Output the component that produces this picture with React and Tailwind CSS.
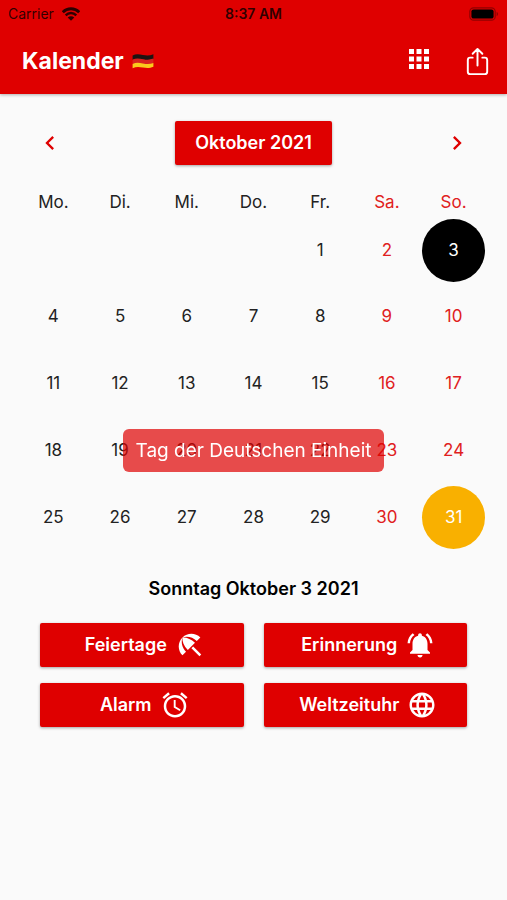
import { useState } from 'react';
import { IoShareOutline } from 'react-icons/io5';
import {
  MdAlarm,
  MdApps,
  MdBeachAccess,
  MdChevronLeft,
  MdChevronRight,
  MdLanguage,
  MdNotificationsActive,
} from 'react-icons/md';

const monate = [
  'Januar', 'Februar', 'März', 'April', 'Mai', 'Juni',
  'Juli', 'August', 'September', 'Oktober', 'November', 'Dezember',
];

const wochentage = ['Mo.', 'Di.', 'Mi.', 'Do.', 'Fr.', 'Sa.', 'So.'];

const tagNamen = [
  'Montag', 'Dienstag', 'Mittwoch', 'Donnerstag', 'Freitag', 'Samstag', 'Sonntag',
];

const feiertage = {
  '2021-10-3': 'Tag der Deutschen Einheit',
  '2021-10-31': 'Reformationstag',
};

const aktionen = [
  { id: 'feiertage', label: 'Feiertage', Icon: MdBeachAccess },
  { id: 'erinnerung', label: 'Erinnerung', Icon: MdNotificationsActive },
  { id: 'alarm', label: 'Alarm', Icon: MdAlarm },
  { id: 'weltzeituhr', label: 'Weltzeituhr', Icon: MdLanguage },
];

// Monday is column 0
function spalte(date) {
  return (date.getDay() + 6) % 7;
}

function getWochen(jahr, monat) {
  const anzahl = new Date(jahr, monat + 1, 0).getDate();
  const zellen = Array(spalte(new Date(jahr, monat, 1))).fill(null);
  for (let tag = 1; tag <= anzahl; tag++) zellen.push(tag);
  while (zellen.length % 7 !== 0) zellen.push(null);

  const wochen = [];
  for (let i = 0; i < zellen.length; i += 7) wochen.push(zellen.slice(i, i + 7));
  return wochen;
}

function feiertagAm(date) {
  return feiertage[`${date.getFullYear()}-${date.getMonth() + 1}-${date.getDate()}`];
}

function WifiIcon() {
  return (
    <svg viewBox="0 0 18 14" className="h-[14px] w-[18px]" fill="none" stroke="currentColor" aria-hidden="true">
      <path d="M0.8 5.2C5.2 0.6 12.8 0.6 17.2 5.2" strokeWidth="2.8" />
      <path d="M3.7 8.3C6.7 5.3 11.3 5.3 14.3 8.3" strokeWidth="2.4" />
      <path d="M9 13.8L5.7 10.5C7.6 8.8 10.4 8.8 12.3 10.5Z" fill="currentColor" stroke="none" />
    </svg>
  );
}

function BatteryIcon() {
  return (
    <svg viewBox="0 0 30 14" className="h-[14px] w-[30px]" aria-hidden="true">
      <rect x="0.8" y="0.8" width="25.4" height="12.4" rx="3.8" fill="none" stroke="#000" strokeOpacity="0.35" strokeWidth="1.2" />
      <rect x="2.4" y="2.4" width="22.2" height="9.2" rx="2.2" fill="#000" />
      <path d="M27.6 4.8C29.6 5.6 29.6 8.4 27.6 9.2Z" fill="#000" fillOpacity="0.35" />
    </svg>
  );
}

function Flagge() {
  return (
    <svg viewBox="0 0 22 16" className="h-4 w-[22px]" role="img" aria-label="Deutschland">
      <path d="M0.6 2.4C4 0.8 7 1.2 11 2C15 2.8 18 2.6 21.4 1.2V6C18 7.4 15 7.4 11 6.6C7 5.8 4 5.4 0.6 7Z" fill="#1d1412" />
      <path d="M0.6 6.6C4 5 7 5.4 11 6.2C15 7 18 7 21.4 5.6V10.2C18 11.6 15 11.6 11 10.8C7 10 4 9.6 0.6 11.2Z" fill="#d8211f" />
      <path d="M0.6 10.9C4 9.3 7 9.7 11 10.5C15 11.3 18 11.3 21.4 9.9V13.8C18 15.3 15 15.4 11 14.6C7 13.8 4 13.6 0.6 15.2Z" fill="#fbc91c" />
    </svg>
  );
}

function StatusBar() {
  return (
    <div className="grid h-7 grid-cols-3 items-center px-2 text-sm text-black/80">
      <div className="flex items-center gap-2">
        <span>Carrier</span>
        <WifiIcon />
      </div>
      <span className="text-center font-semibold">8:37 AM</span>
      <div className="flex justify-end">
        <BatteryIcon />
      </div>
    </div>
  );
}

function tagFarbe(date, ausgewaehlt, index) {
  if (ausgewaehlt) return 'bg-black text-white';
  if (feiertagAm(date)) return 'bg-[#f9b000] text-white';
  return index >= 5 ? 'text-[#e02020]' : 'text-[#222222]';
}

export default function App() {
  const [monatRef, setMonatRef] = useState(() => new Date(2021, 9, 1));
  const [auswahl, setAuswahl] = useState(() => new Date(2021, 9, 3));

  const jahr = monatRef.getFullYear();
  const monat = monatRef.getMonth();
  const feiertag = feiertagAm(auswahl);

  function navegieren(richtung) {
    setMonatRef(new Date(jahr, monat + richtung, 1));
  }

  return (
    <div className="min-h-screen bg-[#fafafa] font-['Inter','Liberation_Sans',sans-serif]">
      <header className="bg-[#df0000] shadow-[0_1px_3px_rgba(0,0,0,0.3)]">
        <StatusBar />
        <div className="flex h-[66px] items-center justify-between pr-3.5 pl-[22px] text-white">
          <div className="flex items-center gap-2">
            <h1 className="text-[23px] font-bold">Kalender</h1>
            <Flagge />
          </div>
          <div className="flex items-center gap-7">
            <button type="button" aria-label="Übersicht">
              <MdApps className="mb-1 size-[30px]" />
            </button>
            <button type="button" aria-label="Teilen">
              <IoShareOutline className="size-[31px]" />
            </button>
          </div>
        </div>
      </header>

      <main>
        <div className="flex items-center justify-between px-9 pt-[27px]">
          <button type="button" aria-label="Vorheriger Monat" onClick={() => navegieren(-1)} className="text-[#df0000]">
            <MdChevronLeft className="size-7" />
          </button>
          <button
            type="button"
            className="h-11 rounded-xs bg-[#df0000] px-5 text-lg font-semibold text-white shadow-[0_1px_3px_rgba(0,0,0,0.35)]"
          >
            {monate[monat]} {jahr}
          </button>
          <button type="button" aria-label="Nächster Monat" onClick={() => navegieren(1)} className="text-[#df0000]">
            <MdChevronRight className="size-7" />
          </button>
        </div>

        <div className="px-5 pt-6">
          <table className="w-full table-fixed text-[17px]">
            <thead>
              <tr>
                {wochentage.map((name, i) => (
                  <th
                    key={name}
                    scope="col"
                    className={`h-7 p-0 text-center font-normal ${i >= 5 ? 'text-[#e02020]' : 'text-[#222222]'}`}
                  >
                    {name}
                  </th>
                ))}
              </tr>
            </thead>
            <tbody>
              {getWochen(jahr, monat).map((woche, w) => (
                <tr key={w}>
                  {woche.map((tag, i) => {
                    if (!tag) return <td key={i} />;
                    const date = new Date(jahr, monat, tag);
                    const ausgewaehlt = date.getTime() === auswahl.getTime();
                    return (
                      <td key={i} className="p-0.5">
                        <button
                          type="button"
                          aria-pressed={ausgewaehlt}
                          onClick={() => setAuswahl(date)}
                          className={`block aspect-square w-full rounded-full ${tagFarbe(date, ausgewaehlt, i)}`}
                        >
                          {tag}
                        </button>
                      </td>
                    );
                  })}
                </tr>
              ))}
            </tbody>
          </table>
        </div>

        <h2 className="pt-[26px] text-center text-lg leading-6 font-semibold text-black">
          {tagNamen[spalte(auswahl)]} {monate[auswahl.getMonth()]} {auswahl.getDate()} {auswahl.getFullYear()}
        </h2>

        <div className="grid grid-cols-2 gap-x-5 gap-y-4 px-10 pt-[22px]">
          {aktionen.map(({ id, label, Icon }) => (
            <button
              key={id}
              type="button"
              className="flex h-11 items-center justify-center gap-2 rounded-xs bg-[#df0000] pl-1.5 text-lg font-semibold text-white shadow-[0_1px_3px_rgba(0,0,0,0.35)]"
            >
              {label}
              <Icon className="size-[30px]" />
            </button>
          ))}
        </div>
      </main>

      {feiertag && (
        <div className="pointer-events-none fixed inset-0 flex items-center justify-center">
          <p role="status" className="rounded-md bg-[#df0000]/70 px-[13px] py-2 text-[19px] leading-[27px] text-white">
            {feiertag}
          </p>
        </div>
      )}
    </div>
  );
}
